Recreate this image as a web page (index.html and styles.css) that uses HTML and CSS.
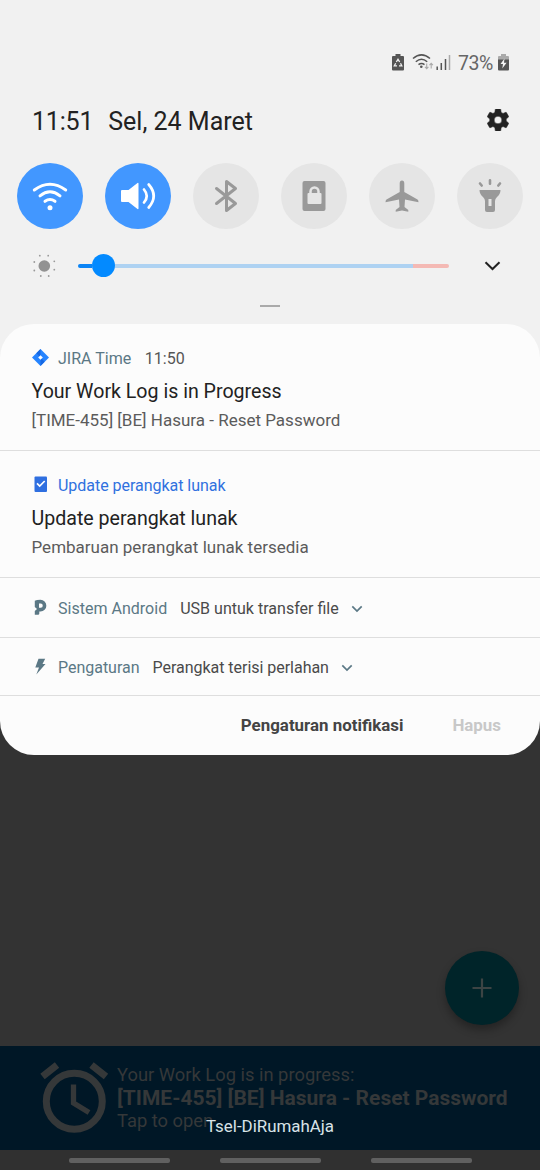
FILE: index.html
```html
<!DOCTYPE html>
<html lang="id">
<head>
<meta charset="utf-8">
<title>Notifikasi</title>
<link rel="stylesheet" href="styles.css">
</head>
<body>
<div class="screen">
  <header class="panel">
    <div class="status">
      <svg class="st-saver" width="12" height="17" viewBox="0 0 12 17"><path d="M3.500 0h5v2H11q1 0 1 1v12.500q0 1-1 1H1q-1 0-1-1V3q0-1 1-1h2.500z" fill="#555"/><path d="M4.300 8 6 5.300 7.700 8M8.500 9.300l1.300 2.500H7M5 11.800H2.300l1.400-2.500" fill="none" stroke="#f1f1f1" stroke-width="1.300"/></svg>
      <svg class="st-wifi" width="22" height="18" viewBox="0 0 22 18"><g fill="none" stroke="#555" stroke-width="1.500"><path d="M1 5.500Q9.500-1.800 18 5.500M3.800 8.700Q9.500 3.800 15.200 8.700M6.500 11.600Q9.500 9.200 12.500 11.600"/></g><circle cx="9.300" cy="13.700" r="1.300" fill="#555"/><path d="M14.700 10.500v5M13 13.800l1.700 1.900 1.700-1.900M19.200 15.500v-5M17.500 12.200l1.700-1.900 1.700 1.900" fill="none" stroke="#aaa" stroke-width="1.100"/></svg>
      <svg class="st-signal" width="15" height="16" viewBox="0 0 15 16"><path d="M1.200 12.500V16M5.300 9v7M9.500 5v11" stroke="#555" stroke-width="1.500"/><path d="M13.500 1v15" stroke="#aaa" stroke-width="1.500"/></svg>
      <span class="percent">73%</span>
      <svg class="st-battery" width="11" height="17" viewBox="0 0 11 17"><path d="M3 0h5v2h2q1 0 1 1v3H0V3q0-1 1-1h2z" fill="#aaa"/><path d="M0 5.500h11v10q0 1-1 1H1q-1 0-1-1z" fill="#555"/><path d="M6.500 4.500 2.500 10H5l-.7 4.500L8.600 8.700H6z" fill="#f4f4f4"/></svg>
    </div>
    <div class="clock">
      <span class="time">11:51</span><span class="date">Sel, 24 Maret</span>
      <svg class="gear" width="22" height="22" viewBox="2 2 20 20"><path fill="#222" stroke="#222" stroke-width=".5" d="M19.430 12.980c.04-.32.07-.64.07-.98s-.03-.66-.07-.98l2.110-1.650a.5.500 0 0 0 .12-.64l-2-3.460a.5.500 0 0 0-.61-.22l-2.490 1a7.300 7.300 0 0 0-1.690-.98l-.38-2.650A.49.490 0 0 0 14 2h-4a.49.490 0 0 0-.49.420l-.38 2.650c-.61.250-1.170.590-1.690.980l-2.490-1a.49.490 0 0 0-.61.220l-2 3.460a.49.490 0 0 0 .12.640l2.110 1.650a7.900 7.900 0 0 0 0 1.960l-2.110 1.650a.5.500 0 0 0-.12.640l2 3.460c.12.220.390.300.610.220l2.490-1c.52.400 1.080.730 1.690.980l.38 2.650c.03.240.240.420.490.420h4c.25 0 .46-.18.490-.42l.38-2.650c.61-.25 1.170-.59 1.690-.98l2.490 1c.23.090.49 0 .61-.22l2-3.460a.5.500 0 0 0-.12-.64zM12 15.500a3.500 3.500 0 1 1 0-7 3.500 3.500 0 0 1 0 7z"/></svg>
    </div>
    <div class="toggles">
      <div class="toggle on"><svg width="66" height="66" viewBox="0 0 66 66"><g fill="none" stroke="#fff" stroke-width="3" stroke-linecap="round"><path d="M17.300 27Q33 15.500 48.700 27M23 32.800Q33 24.800 43 32.800M28 38.300Q33 34.800 38 38.300"/></g><circle cx="33" cy="44.700" r="2.500" fill="#fff"/></svg></div>
      <div class="toggle on"><svg width="66" height="66" viewBox="0 0 66 66"><path d="M17 27h6.500L32.500 20q1-.5 1 .7v24.600q0 1.200-1 .7L23.500 39H17q-1 0-1-1V28q0-1 1-1z" fill="#fff"/><path d="M39 26.500q5.500 6.500 0 13M43.700 21.500q10 11.500 0 23" fill="none" stroke="#fff" stroke-width="2.700" stroke-linecap="round"/></svg></div>
      <div class="toggle"><svg width="66" height="66" viewBox="0 0 66 66"><path d="M23.500 25.500 42.500 40.500 33.500 47.500V18.500L42.500 25.500 23.500 40.500" fill="none" stroke="#999" stroke-width="3" stroke-linecap="round" stroke-linejoin="round"/></svg></div>
      <div class="toggle"><svg width="66" height="66" viewBox="0 0 66 66"><rect x="21.500" y="18" width="23" height="30" rx="2" fill="#999"/><rect x="26.500" y="30" width="14" height="11" rx="1" fill="#e5e5e5"/><path d="M29.500 31v-2.500a4 4 0 0 1 8 0V31" fill="none" stroke="#e5e5e5" stroke-width="2.500"/></svg></div>
      <div class="toggle"><svg width="66" height="66" viewBox="0 0 66 66"><path d="M33 17.500q2.300 0 2.300 3V29L48.500 36.500q1 .6 1 2.800L36 36.500 35.500 44l3.800 3v1.800L33 47.500l-6.300 1.300V47l3.800-3L30 36.500 16.500 39.300q0-2.200 1-2.800L30.700 29v-8.500q0-3 2.300-3z" fill="#999"/></svg></div>
      <div class="toggle"><svg width="66" height="66" viewBox="0 0 66 66"><path fill-rule="evenodd" d="M22.500 27h21q0 4-3.500 7-2 2-2 4v9q0 2-2 2h-6q-2 0-2-2v-9q0-2-2-4-3.500-3-3.500-7zM31.500 36v7h3v-7z" fill="#999"/><path d="M33 17.300v3.500M23 20.500l1.700 2M43 20.500l-1.700 2" stroke="#999" stroke-width="2.600" stroke-linecap="round"/></svg></div>
    </div>
    <div class="brightness">
      <svg class="sun" width="24" height="24" viewBox="0 0 24 24"><circle cx="12.300" cy="12" r="5.800" fill="#929292"/><g fill="#999"><circle cx="7.800" cy="1.700" r=".9"/><circle cx="16.200" cy="1.700" r=".9"/><circle cx="22.300" cy="7.300" r=".9"/><circle cx="22.300" cy="15.700" r=".9"/><circle cx="16.700" cy="22" r=".9"/><circle cx="8.800" cy="22" r=".9"/><circle cx="2.300" cy="16.500" r=".9"/><circle cx="2.300" cy="8" r=".9"/></g></svg>
      <div class="track"><div class="filled"></div><div class="thumb"></div><div class="normal"></div><div class="high"></div></div>
      <svg class="expand" width="17" height="10" viewBox="0 0 17 10"><path d="M1.500 1.200 8.500 8l7-6.800" fill="none" stroke="#222" stroke-width="2"/></svg>
    </div>
    <div class="handle"></div>
  </header>

  <main class="card">
    <section class="note">
      <div class="source"><svg class="ico" width="18" height="18" viewBox="0 0 18 18"><path d="M8.500 0 17 8.500 8.500 17 0 8.500z" fill="#2684ff"/><path d="M8.500 0 4.300 4.200 8.500 8.500zM8.500 17l4.200-4.200L8.500 8.500z" fill="#1668e3"/><path d="M8.500 6.200 10.800 8.500 8.500 10.800 6.200 8.500z" fill="#fff"/></svg><span class="app">JIRA Time</span><span class="when">11:50</span></div>
      <h2 class="title">Your Work Log is in Progress</h2>
      <p class="body">[TIME-455] [BE] Hasura - Reset Password</p>
    </section>
    <section class="note">
      <div class="source"><svg class="ico" width="18" height="18" viewBox="0 0 18 18"><rect x="2.500" y=".5" width="12.500" height="15.500" rx="1" fill="#2f6fe0"/><path d="M5 7.300 7.700 10l5-5" fill="none" stroke="#fff" stroke-width="1.700"/></svg><span class="app update">Update perangkat lunak</span></div>
      <h2 class="title">Update perangkat lunak</h2>
      <p class="body">Pembaruan perangkat lunak tersedia</p>
    </section>
    <section class="line"><svg class="ico" width="18" height="18" viewBox="0 0 18 18"><path fill-rule="evenodd" d="M2.800 1.800Q4.500.8 8.500.8a5.800 5.800 0 0 1 0 11.700H7.300V14.500q0 1.300-1.300 1.300H2.800V12L5 10 2.800 8zM7 4.600V8.700h1.700a2 2 0 0 0 0-4.100z" fill="#5b7885"/></svg><span class="app">Sistem Android</span><span class="text">USB untuk transfer file</span><svg class="chev" width="12" height="8" viewBox="0 0 12 8"><path d="M1.300 1.300 6 6l4.700-4.700" fill="none" stroke="#5b7885" stroke-width="1.700"/></svg></section>
    <section class="line charge"><svg class="ico" width="18" height="18" viewBox="0 0 18 18"><path d="M6.500.8h6.700L10.500 6h3L4.300 16.500 7 9.500H3.300z" fill="#5b7885"/></svg><span class="app">Pengaturan</span><span class="text">Perangkat terisi perlahan</span><svg class="chev" width="12" height="8" viewBox="0 0 12 8"><path d="M1.300 1.300 6 6l4.700-4.700" fill="none" stroke="#5b7885" stroke-width="1.700"/></svg></section>
    <footer class="actions"><span class="settings">Pengaturan notifikasi</span><span class="clear">Hapus</span></footer>
  </main>

  <div class="backdrop">
    <div class="fab"><svg width="20" height="20" viewBox="0 0 20 20"><path d="M10 .5v19M.5 10h19" stroke="#3c4444" stroke-width="2.200"/></svg></div>
  </div>
  <div class="banner">
    <svg class="alarm" width="70" height="72" viewBox="0 0 70 72"><g fill="none" stroke="#353839"><circle cx="35.300" cy="39.300" r="28" stroke-width="7"/><path d="M3.500 14.500 18 3M52.500 3l14.500 11.500" stroke-width="7"/><path d="M34.500 22.500V41L50 50.500" stroke-width="5.300"/></g></svg>
    <div class="progress"><span>Your Work Log is in progress:</span><b>[TIME-455] [BE] Hasura - Reset Password</b><span>Tap to open</span></div>
    <span class="carrier">Tsel-DiRumahAja</span>
  </div>
  <nav class="nav"><i></i><i></i><i></i></nav>
</div>
</body>
</html>
```
FILE: styles.css
```css
* { box-sizing: border-box; }
body { margin: 0; font-family: Roboto, sans-serif; background: #333; }
svg { display: block; flex: none; }
span, h2, p, b { white-space: nowrap; }
.screen { width: 540px; height: 1170px; display: flex; flex-direction: column; background: linear-gradient(#f1f1f1 0 360px, #333 360px); overflow: hidden; }
.panel { height: 324px; flex: none; }
.status { height: 82px; padding: 42px 31px 0 0; display: flex; align-items: center; justify-content: flex-end; }
.st-wifi { margin-left: 8px; }
.st-signal { margin-left: 2px; }
.percent { font-size: 19.500px; color: #666; margin-left: 7px; padding-top: 2px; width: 37px; letter-spacing: -.4px; }
.st-battery { margin-left: 3px; }
.clock { height: 76px; padding: 0 31px 0 32px; display: flex; align-items: center; font-size: 25px; color: #222; }
.time { letter-spacing: -.2px; }
.time, .date { padding-top: 2px; }
.date { margin-left: 15px; }
.gear { margin-left: auto; }
.toggles { margin-top: 5px; padding: 0 17px; display: flex; gap: 22px; height: 66px; }
.toggle { width: 66px; height: 66px; flex: none; border-radius: 50%; background: #e5e5e5; }
.toggle.on { background: #4297ff; }
.brightness { height: 73px; padding-left: 32px; display: flex; align-items: center; }
.track { width: 371px; margin-left: 22px; display: flex; align-items: center; }
.track div { height: 4px; }
.track .filled { width: 14px; background: #0b84f5; border-radius: 2px 0 0 2px; }
.track .thumb { width: 23px; height: 23px; border-radius: 50%; background: #038aff; }
.track .normal { width: 298px; background: #aed2f2; }
.track .high { width: 36px; background: #f4b9b4; border-radius: 0 2px 2px 0; }
.expand { margin-left: 35px; }
.handle { width: 20px; height: 2px; margin: 3px auto 0; background: #aaa; }
.card { height: 431px; flex: none; background: #fcfcfc; border-radius: 34px; }
.note { height: 127px; padding: 22px 32px 0 31.500px; border-bottom: 1px solid #dedede; }
.source { height: 24px; padding-left: .5px; display: flex; align-items: center; font-size: 16.050px; }
.ico { margin-right: 8px; }
.app { color: #5b7885; }
.update { color: #3071df; letter-spacing: -.05px; }
.when { margin-left: 13.500px; color: #555; }
.title { margin: 9px 0 0; font-size: 19.600px; font-weight: 400; line-height: 26px; color: #222; }
.body { margin: 4px 0 0; font-size: 17px; line-height: 22px; color: #5b5b5b; }
.line { display: flex; align-items: center; height: 60px; padding: 1px 0 0 32px; font-size: 16.050px; border-bottom: 1px solid #dedede; }
.charge { height: 58px; letter-spacing: -.04px; }
.text { color: #4a4a4a; margin-left: 13px; }
.chev { margin: 2px 0 0 12px; }
.actions { height: 59px; padding-bottom: 1px; display: flex; justify-content: flex-end; align-items: center; padding-right: 39px; font-size: 16.900px; font-weight: 700; color: #444; }
.clear { color: #c8c8c8; margin-left: 49px; }
.backdrop { height: 291px; flex: none; display: flex; align-items: flex-end; justify-content: flex-end; padding: 0 21px 21px 0; background: #333; }
.fab { width: 74px; height: 74px; border-radius: 50%; background: #002429; display: flex; align-items: center; justify-content: center; box-shadow: 0 5px 9px rgba(0,0,0,.3); }
.banner { height: 104px; flex: none; position: relative; background: #001726; display: flex; padding: 16px 0 0 39px; }
.progress { display: flex; flex-direction: column; margin-left: 8px; padding-top: 1px; font-size: 18.350px; line-height: 23px; color: #353839; }
.progress b { font-size: 21px; line-height: 23px; padding-top: 1px; margin-bottom: -1px; }
.carrier { position: absolute; left: 206px; top: 70px; font-size: 16.900px; line-height: 20px; color: #d8e3e8; }
.nav { height: 20px; flex: none; background: #303030; display: flex; justify-content: center; align-items: center; gap: 50px; }
.nav i { width: 101px; height: 5px; border-radius: 2px; background: #606060; }
```
